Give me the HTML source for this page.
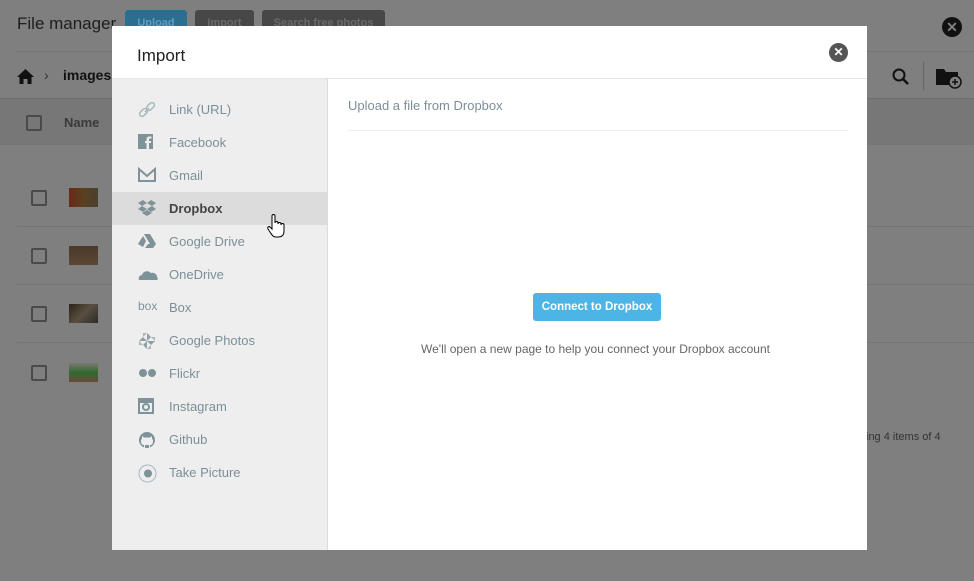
<!DOCTYPE html>
<html><head><meta charset="utf-8"><style>
*{box-sizing:border-box;margin:0;padding:0}
body{width:974px;height:581px;overflow:hidden;background:#7f7f7f;font-family:"Liberation Sans",sans-serif;position:relative}
.a{position:absolute}
.side div.it{position:absolute;left:0;width:216px;height:33px;display:flex;align-items:center;font-size:13px;color:#7b8f98}
.it svg{position:absolute;left:26px;top:8px}
.it span{position:absolute;left:57px}
.cb{position:absolute;width:16px;height:16px;border:2px solid #4a4a4a;border-radius:2px}
.th{position:absolute;left:69px;width:29px;height:19px}
.hl{position:absolute;left:17px;width:957px;height:1px;background:#757575}
.bb{position:absolute;top:10px;height:20px;border-radius:3px;font-size:11px;font-weight:bold;text-align:center;line-height:26px;overflow:hidden}
</style></head><body>
<div class="a" style="left:17px;top:14px;font-size:17px;color:#1e1e1e">File manager</div>
<div class="bb" style="left:125px;width:62px;background:#2a6e90;color:#5f9dbd">Upload</div>
<div class="bb" style="left:195px;width:59px;background:#474747;color:#6a6a6a">Import</div>
<div class="bb" style="left:262px;width:123px;background:#474747;color:#6a6a6a">Search free photos</div>
<div class="a" style="left:942px;top:17px;width:20px;height:20px;border-radius:50%;background:#111;color:#7f7f7f;font-size:14px;font-weight:bold;text-align:center;line-height:20px">✕</div>
<div class="hl" style="top:51px"></div>
<svg class="a" style="left:17px;top:69px" width="17" height="15"><path d="M8.5 0L0 8h2.5v7h4v-5h4v5h4V8H17z" fill="#111"/></svg>
<div class="a" style="left:44px;top:67px;font-size:14px;color:#333">›</div>
<div class="a" style="left:63px;top:67px;font-size:14px;font-weight:bold;color:#111">images</div>
<svg class="a" style="left:892px;top:68px" width="18" height="18"><circle cx="7" cy="7" r="5.5" fill="none" stroke="#111" stroke-width="2"/><path d="M11 11l5 5" stroke="#111" stroke-width="2.5"/></svg>
<div class="a" style="left:923px;top:62px;width:1px;height:28px;background:#666"></div>
<svg class="a" style="left:936px;top:67px" width="26" height="22"><path d="M0 2h8l2 3h12v13H0z" fill="#111"/><circle cx="19" cy="15" r="6" fill="#7f7f7f" stroke="#111" stroke-width="1.5"/><path d="M19 12v6M16 15h6" stroke="#111" stroke-width="1.5"/></svg>
<div class="a" style="left:0;top:98px;width:974px;height:1px;background:#6e6e6e"></div>
<div class="a" style="left:0;top:99px;width:974px;height:46px;background:#777"></div>
<div class="cb" style="left:26px;top:115px"></div>
<div class="a" style="left:64px;top:115px;font-size:13px;font-weight:bold;color:#3a3a3a">Name</div>
<div class="cb" style="left:31px;top:190px"></div><div class="th" style="top:188px;background:linear-gradient(90deg,#6a2a18,#5a4020,#4a4030)"></div>
<div class="hl" style="top:226px"></div>
<div class="cb" style="left:31px;top:248px"></div><div class="th" style="top:246px;background:linear-gradient(180deg,#4a3a2a,#5a4634)"></div>
<div class="hl" style="top:284px"></div>
<div class="cb" style="left:31px;top:306px"></div><div class="th" style="top:304px;background:linear-gradient(135deg,#2a2218,#5a5040,#2a2a2a)"></div>
<div class="hl" style="top:342px"></div>
<div class="cb" style="left:31px;top:365px"></div><div class="th" style="top:363px;background:linear-gradient(180deg,#7a7a70,#2e6a30 50%,#6a4a3a)"></div>
<div class="a" style="left:866px;top:431px;font-size:11px;color:#333">ing 4 items of 4</div>

<div class="a" style="left:112px;top:26px;width:755px;height:524px;background:#fff">
  <div class="a" style="left:25px;top:20px;font-size:17px;color:#222">Import</div>
  <div class="a" style="left:717px;top:17px;width:19px;height:19px;border-radius:50%;background:#555;color:#fff;font-size:12px;font-weight:bold;text-align:center;line-height:19px">✕</div>
  <div class="a" style="left:0;top:52px;width:755px;height:1px;background:#e4e4e4"></div>
  <div class="a side" style="left:0;top:53px;width:216px;height:471px;background:#eeeeee;border-right:1px solid #dcdcdc">
    <div class="it" style="top:14px"><svg width="18" height="18"><g fill="none" stroke="#a8b8bd" stroke-width="1.5"><path d="M7 11l4-4"/><rect x="1" y="9" width="9" height="5" rx="2.5" transform="rotate(-45 5.5 11.5)"/><rect x="8" y="3" width="9" height="5" rx="2.5" transform="rotate(-45 12.5 5.5)"/></g></svg><span>Link (URL)</span></div>
    <div class="it" style="top:47px"><svg width="16" height="16"><rect width="15" height="15" fill="#7e9399"/><path d="M11 15V9h2v-2h-2V5.5c0-.8.5-1 1-1h1.5V2.5h-2c-2 0-3 1.2-3 3V7H7v2h1.5v6z" fill="#eee"/></svg><span>Facebook</span></div>
    <div class="it" style="top:80px"><svg width="18" height="16"><path d="M1 2v12h16V2L9 9z" fill="none" stroke="#7e9399" stroke-width="2"/></svg><span>Gmail</span></div>
    <div class="it" style="top:113px;background:#dcdcdc;color:#444;font-weight:bold"><svg width="18" height="16"><g fill="#7e9399"><path d="M5 0L0 3l4 3 5-3zM13 0l5 3-4 3-5-3zM0 9l5 3 4-3-5-3zM18 9l-5 3-4-3 5-3zM4 13l5 3 5-3-5-3z"/></g></svg><span>Dropbox</span></div>
    <div class="it" style="top:146px"><svg width="18" height="16"><path d="M6 1h6l6 10h-6zM5 3l3 5-3 6-5-3zM7 15l3-4h8l-3 4z" fill="#7e9399"/></svg><span>Google Drive</span></div>
    <div class="it" style="top:179px"><svg width="20" height="14" style="top:10px"><path d="M1 12c-1-3 1-5 3-5 1-4 6-5 9-2 3-1 6 1 6 4 1 1 1 3 0 3z" fill="#7e9399"/></svg><span>OneDrive</span></div>
    <div class="it" style="top:212px"><svg width="22" height="14"><text x="0" y="11" font-size="12" fill="#7e9399" font-family="Liberation Sans">box</text></svg><span>Box</span></div>
    <div class="it" style="top:245px"><svg width="18" height="18"><path d="M9 1l4 4-4 4zM17 9l-4 4-4-4zM9 17l-4-4 4-4zM1 9l4-4 4 4z" fill="#8da0a5"/><path d="M9 1h-4v4M17 9v-4h-4M9 17h4v-4M1 9v4h4" fill="#a8b8bd"/></svg><span>Google Photos</span></div>
    <div class="it" style="top:278px"><svg width="20" height="16"><circle cx="5" cy="8" r="4" fill="#7e9399"/><circle cx="14" cy="8" r="4" fill="#7e9399"/></svg><span>Flickr</span></div>
    <div class="it" style="top:311px"><svg width="16" height="16"><rect x="1" y="1" width="14" height="14" fill="none" stroke="#7e9399" stroke-width="2"/><rect x="1" y="1" width="14" height="4" fill="#7e9399"/><circle cx="8" cy="9" r="3" fill="none" stroke="#7e9399" stroke-width="2"/></svg><span>Instagram</span></div>
    <div class="it" style="top:344px"><svg width="18" height="18"><circle cx="9" cy="9" r="8" fill="#7e9399"/><path d="M6 17v-3c-2 0-3-1-3-4 0-1 .5-2 1-2.5V5l2 1.5h6L14 5v2.5c.5.5 1 1.5 1 2.5 0 3-1 4-3 4v3z" fill="#eee"/><path d="M7 17v-3h4v3" fill="#7e9399"/></svg><span>Github</span></div>
    <div class="it" style="top:377px"><svg width="19" height="19"><circle cx="9.5" cy="9.5" r="8.5" fill="none" stroke="#a8b8bd" stroke-width="1"/><circle cx="10" cy="9.5" r="4" fill="#7e9399"/></svg><span>Take Picture</span></div>
  </div>
  <div class="a" style="left:236px;top:72px;font-size:13px;color:#7b8f98">Upload a file from Dropbox</div>
  <div class="a" style="left:236px;top:104px;width:500px;height:1px;background:#ececec"></div>
  <div class="a" style="left:421px;top:267px;width:128px;height:28px;background:#4db5e6;border-radius:3px;color:#fff;font-size:11.5px;font-weight:bold;text-align:center;line-height:28px">Connect to Dropbox</div>
  <div class="a" style="left:236px;top:316px;width:495px;text-align:center;font-size:12px;color:#666">We'll open a new page to help you connect your Dropbox account</div>
  <svg class="a" style="left:155px;top:187px" width="18" height="26"><path d="M5 14V3c0-2 3-2 3 0v7c0-2 3-2 3 0v1c0-2 3-2 3 0v1c0-2 3-2 3 0v6c0 4-2 6-6 6h-2c-3 0-4-2-6-5l-2-3c-1-2 1-3 2-2l2 2z" fill="#fff" stroke="#000" stroke-width="1"/></svg>
</div>
</body></html>
